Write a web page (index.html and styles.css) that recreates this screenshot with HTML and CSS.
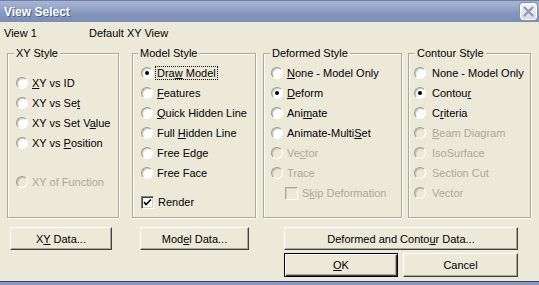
FILE: index.html
```html
<!DOCTYPE html>
<html lang="en">
<head>
    <meta charset="UTF-8">
    <title>View Select</title>
    <link rel="stylesheet" href="styles.css">
</head>
<body>
    <div class="window">
        <div class="titlebar">
            <span class="title">View Select</span>
            <span class="close-btn">
                <svg width="11" height="11" viewBox="0 0 11 11">
                    <path d="M1.5 1.5 L9.5 9.5 M9.5 1.5 L1.5 9.5" stroke="#9098ae" stroke-width="2.2" stroke-linecap="round"/>
                </svg>
            </span>
        </div>

        <div class="info">
            <span class="view-num">View 1</span>
            <span>Default XY View</span>
        </div>

        <div class="groups">
            <fieldset class="group group-xy">
                <legend>XY Style</legend>
                <div class="spacer-top"></div>
                <div class="opt"><span class="radio"></span><span><u>X</u>Y vs ID</span></div>
                <div class="opt"><span class="radio"></span><span>XY vs Se<u>t</u></span></div>
                <div class="opt"><span class="radio"></span><span>XY vs Set V<u>a</u>lue</span></div>
                <div class="opt"><span class="radio"></span><span>XY vs <u>P</u>osition</span></div>
                <div class="spacer-row"></div>
                <div class="opt disabled"><span class="radio"></span><span>XY of Function</span></div>
            </fieldset>

            <fieldset class="group group-model">
                <legend>Model Style</legend>
                <div class="opt"><span class="radio checked"></span><span class="focus">Dra<u>w</u> Model</span></div>
                <div class="opt"><span class="radio"></span><span><u>F</u>eatures</span></div>
                <div class="opt"><span class="radio"></span><span><u>Q</u>uick Hidden Line</span></div>
                <div class="opt"><span class="radio"></span><span>Full <u>H</u>idden Line</span></div>
                <div class="opt"><span class="radio"></span><span>Free Edge</span></div>
                <div class="opt"><span class="radio"></span><span>Free Face</span></div>
                <div class="spacer-small"></div>
                <div class="opt"><span class="check checked">
                    <svg width="9" height="9" viewBox="0 0 9 9"><path d="M1 4 L3 6.5 L8 1.5" stroke="#000" stroke-width="1.6" fill="none"/></svg>
                </span><span>Render</span></div>
            </fieldset>

            <fieldset class="group group-deformed">
                <legend>Deformed Style</legend>
                <div class="opt"><span class="radio"></span><span><u>N</u>one - Model Only</span></div>
                <div class="opt"><span class="radio checked"></span><span><u>D</u>eform</span></div>
                <div class="opt"><span class="radio"></span><span>Ani<u>m</u>ate</span></div>
                <div class="opt"><span class="radio"></span><span>Animate-Multi<u>S</u>et</span></div>
                <div class="opt disabled"><span class="radio"></span><span>Ve<u>c</u>tor</span></div>
                <div class="opt disabled"><span class="radio"></span><span>Trace</span></div>
                <div class="opt disabled indent"><span class="check"></span><span>S<u>k</u>ip Deformation</span></div>
            </fieldset>

            <fieldset class="group group-contour">
                <legend>Contour Style</legend>
                <div class="opt"><span class="radio"></span><span>None - Model Only</span></div>
                <div class="opt"><span class="radio checked"></span><span>Contou<u>r</u></span></div>
                <div class="opt"><span class="radio"></span><span>C<u>r</u>iteria</span></div>
                <div class="opt disabled"><span class="radio"></span><span><u>B</u>eam Diagram</span></div>
                <div class="opt disabled"><span class="radio"></span><span>IsoSurface</span></div>
                <div class="opt disabled"><span class="radio"></span><span>Section Cut</span></div>
                <div class="opt disabled"><span class="radio"></span><span>Vector</span></div>
            </fieldset>
        </div>

        <div class="btn-row row-one">
            <button class="btn btn-xy">X<u>Y</u> Data...</button>
            <button class="btn btn-model">Mod<u>e</u>l Data...</button>
            <button class="btn btn-results">Deformed and Conto<u>u</u>r Data...</button>
        </div>
        <div class="btn-row row-two">
            <button class="btn btn-ok default"><u>O</u>K</button>
            <button class="btn btn-cancel">Cancel</button>
        </div>
    </div>
</body>
</html>
```

FILE: styles.css
```css
* {
    margin: 0;
    padding: 0;
    box-sizing: border-box;
}

body {
    font-family: "Liberation Sans", Arial, sans-serif;
    font-size: 11px;
    color: #000;
    background: #ece9d8;
    width: 539px;
    height: 285px;
    overflow: hidden;
}

.window {
    height: 285px;
    background: #ece9d8;
    box-shadow: inset 0 -3px 0 #8797bb, inset 0 -4px 0 #34436a;
}

/* title bar */
.titlebar {
    height: 22px;
    display: flex;
    align-items: center;
    justify-content: space-between;
    padding: 0 2px 0 4px;
    background: linear-gradient(to bottom, #a6b4d3 0%, #9eadcf 20%, #8596be 60%, #7c8db6 100%);
    border-top: 1px solid #6f80a8;
}

.title {
    color: #fff;
    font-weight: bold;
    font-size: 12px;
    text-shadow: 1px 1px 0 #4d5d84;
    padding-top: 1px;
}

.close-btn {
    width: 17px;
    height: 17px;
    display: flex;
    align-items: center;
    justify-content: center;
    border: 1px solid #fff;
    border-radius: 3px;
    background: linear-gradient(to bottom, #f1f2f6, #d9dce6);
    box-shadow: 0 0 0 1px #8190b4;
}

/* header line */
.info {
    display: flex;
    height: 14px;
    line-height: 14px;
    margin-top: 4px;
    padding-left: 4px;
}

.view-num {
    width: 85px;
}

/* option groups */
.groups {
    display: flex;
    margin-top: 7px;
    padding-left: 7px;
}

.group {
    height: 171px;
    border: 1px solid #aca899;
    box-shadow: inset 1px 1px 0 #fff, 1px 1px 0 #fff;
    padding: 3px 0 0 8px;
}

.group legend {
    margin-left: -2px;
    padding: 0 2px;
    line-height: 13px;
    background: #ece9d8;
}

.group-xy {
    width: 112px;
}

.group-model {
    width: 124px;
    margin-left: 13px;
}

.group-model legend {
    margin-left: -3px;
}

.group-deformed {
    width: 139px;
    margin-left: 7px;
    padding-left: 7px;
}

.group-deformed legend {
    margin-left: -1px;
}

.group-contour {
    width: 123px;
    margin-left: 6px;
    padding-left: 5px;
}

.group-contour legend {
    margin-left: 1px;
}

.opt {
    height: 20px;
    display: flex;
    align-items: center;
    gap: 4px;
    white-space: nowrap;
}

.group-contour .opt {
    gap: 6px;
}

.opt.disabled {
    color: #aca899;
}

.opt.indent {
    padding-left: 14px;
}

.spacer-top {
    height: 10px;
}

.spacer-row {
    height: 19px;
}

.spacer-small {
    height: 9px;
}

.focus {
    outline: 1px dotted #000;
    outline-offset: 0;
    padding: 0 1px;
    margin-left: -1px;
}

/* radio and check */
.radio {
    position: relative;
    flex: none;
    width: 12px;
    height: 12px;
    border-radius: 50%;
    background: #fff;
    border: 1px solid;
    border-color: #9c9a90 #fff #fff #9c9a90;
    box-shadow: inset 1px 1px 1px #c4c1b4;
}

.disabled .radio {
    background: #ece9d8;
}

.radio.checked::after {
    content: "";
    position: absolute;
    left: 3px;
    top: 3px;
    width: 4px;
    height: 4px;
    border-radius: 50%;
    background: #000;
}

.check {
    flex: none;
    width: 13px;
    height: 13px;
    display: flex;
    align-items: center;
    justify-content: center;
    background: #fff;
    border: 1px solid;
    border-color: #808080 #fff #fff #808080;
    box-shadow: inset 1px 1px 0 #404040, inset -1px -1px 0 #d4d0c8;
}

.disabled .check {
    background: #ece9d8;
    border-color: #aca899 #fff #fff #aca899;
    box-shadow: inset 1px 1px 0 #d4d0c8;
}

/* buttons */
.btn-row {
    display: flex;
}

.row-one {
    margin-top: 9px;
    padding-left: 10px;
}

.row-two {
    margin-top: 3px;
    padding-left: 284px;
    gap: 5px;
}

.btn {
    font-family: "Liberation Sans", Arial, sans-serif;
    font-size: 11px;
    color: #000;
    height: 23px;
    background: #ece9d8;
    border: 1px solid;
    border-color: #fff #404040 #404040 #fff;
    box-shadow: inset -1px -1px 0 #aca899;
}

.btn-xy {
    width: 102px;
}

.btn-model {
    width: 109px;
    margin-left: 28px;
}

.btn-results {
    width: 234px;
    margin-left: 35px;
}

.btn-ok {
    width: 114px;
    height: 24px;
}

.btn-cancel {
    width: 115px;
    height: 24px;
}

.btn.default {
    border: 1px solid #000;
    box-shadow: inset 1px 1px 0 #fff, inset -1px -1px 0 #404040, inset -2px -2px 0 #aca899;
}
```
